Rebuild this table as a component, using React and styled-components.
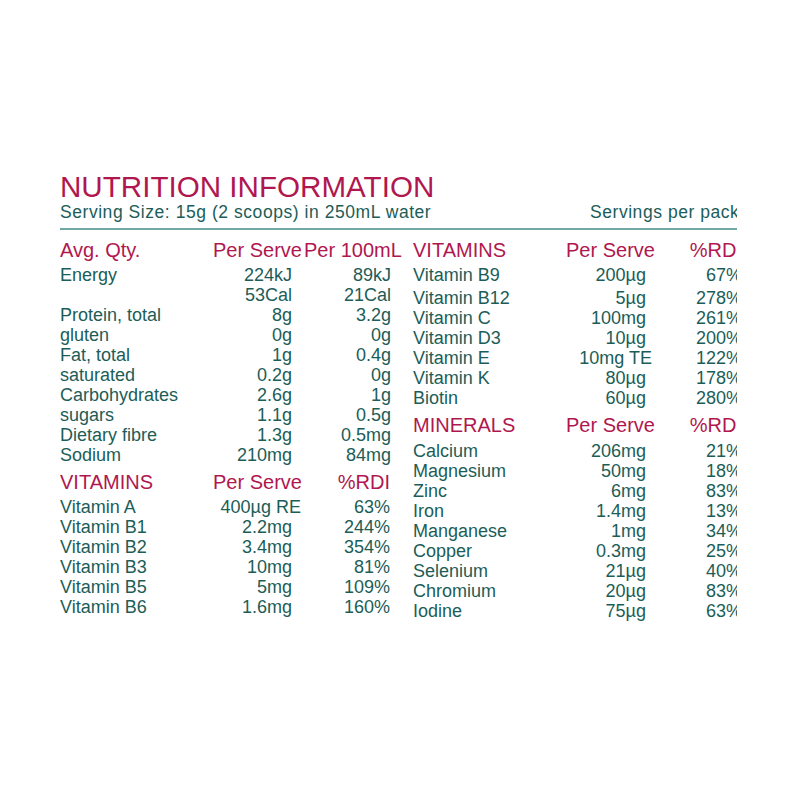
import React from "react";
import styled, { createGlobalStyle } from "styled-components";

const CRIMSON = "#b0174f";
const TEAL = "#1c5d58";

const GlobalStyle = createGlobalStyle`
  html, body {
    margin: 0;
    padding: 0;
    background: #fff;
  }
  body {
    font-family: "Liberation Sans", Arial, sans-serif;
  }
`;

const nutrients = [
  { name: "Energy", serve: "224kJ", per100: "89kJ" },
  { name: "", serve: "53Cal", per100: "21Cal" },
  { name: "Protein, total", serve: "8g", per100: "3.2g" },
  { name: "gluten", serve: "0g", per100: "0g" },
  { name: "Fat, total", serve: "1g", per100: "0.4g" },
  { name: "saturated", serve: "0.2g", per100: "0g" },
  { name: "Carbohydrates", serve: "2.6g", per100: "1g" },
  { name: "sugars", serve: "1.1g", per100: "0.5g" },
  { name: "Dietary fibre", serve: "1.3g", per100: "0.5mg" },
  { name: "Sodium", serve: "210mg", per100: "84mg" },
];

const vitaminsLeft = [
  { name: "Vitamin A", serve: "400µg RE", rdi: "63%", flush: true },
  { name: "Vitamin B1", serve: "2.2mg", rdi: "244%" },
  { name: "Vitamin B2", serve: "3.4mg", rdi: "354%" },
  { name: "Vitamin B3", serve: "10mg", rdi: "81%" },
  { name: "Vitamin B5", serve: "5mg", rdi: "109%" },
  { name: "Vitamin B6", serve: "1.6mg", rdi: "160%" },
];

const vitaminsRight = [
  { name: "Vitamin B9", serve: "200µg", rdi: "67%" },
  { name: "Vitamin B12", serve: "5µg", rdi: "278%", extra: 3 },
  { name: "Vitamin C", serve: "100mg", rdi: "261%" },
  { name: "Vitamin D3", serve: "10µg", rdi: "200%" },
  { name: "Vitamin E", serve: "10mg TE", rdi: "122%", flush: true },
  { name: "Vitamin K", serve: "80µg", rdi: "178%" },
  { name: "Biotin", serve: "60µg", rdi: "280%" },
];

const minerals = [
  { name: "Calcium", serve: "206mg", rdi: "21%" },
  { name: "Magnesium", serve: "50mg", rdi: "18%" },
  { name: "Zinc", serve: "6mg", rdi: "83%" },
  { name: "Iron", serve: "1.4mg", rdi: "13%" },
  { name: "Manganese", serve: "1mg", rdi: "34%" },
  { name: "Copper", serve: "0.3mg", rdi: "25%" },
  { name: "Selenium", serve: "21µg", rdi: "40%" },
  { name: "Chromium", serve: "20µg", rdi: "83%" },
  { name: "Iodine", serve: "75µg", rdi: "63%" },
];

const App = () => {
  return (
    <>
      <GlobalStyle />
      <Page>
        <Panel>
          <Title>NUTRITION INFORMATION</Title>
          <ServingRow>
            <ServingSize>Serving Size: 15g (2 scoops) in 250mL water</ServingSize>
            <span>Servings per pack</span>
          </ServingRow>
          <Rule />
          <Columns>
            <LeftColumn>
              <HeadRow $last={101}>
                <span>Avg. Qty.</span>
                <span>Per Serve</span>
                <HeadCell $indent={3}>Per 100mL</HeadCell>
              </HeadRow>
              {nutrients.map((n, i) => (
                <DataRow key={i} $last={101}>
                  <span>{n.name}</span>
                  <Amount $pad={9}>{n.serve}</Amount>
                  <Amount $pad={11}>{n.per100}</Amount>
                </DataRow>
              ))}

              <HeadRow $last={101} $top={7}>
                <span>VITAMINS</span>
                <span>Per Serve</span>
                <HeadCell $right $pad={12}>%RDI</HeadCell>
              </HeadRow>
              {vitaminsLeft.map((v) => (
                <DataRow key={v.name} $last={101}>
                  <span>{v.name}</span>
                  <Amount $pad={v.flush ? 0 : 9}>{v.serve}</Amount>
                  <Amount $pad={12}>{v.rdi}</Amount>
                </DataRow>
              ))}
            </LeftColumn>

            <RightColumn>
              <HeadRow $last={88}>
                <span>VITAMINS</span>
                <span>Per Serve</span>
                <HeadCell $right>%RDI</HeadCell>
              </HeadRow>
              {vitaminsRight.map((v) => (
                <DataRow key={v.name} $last={88} $extra={v.extra}>
                  <span>{v.name}</span>
                  <Amount $pad={v.flush ? 2 : 8}>{v.serve}</Amount>
                  <Amount $pad={0}>{v.rdi}</Amount>
                </DataRow>
              ))}

              <HeadRow $last={88} $top={7} $after={6}>
                <span>MINERALS</span>
                <span>Per Serve</span>
                <HeadCell $right>%RDI</HeadCell>
              </HeadRow>
              {minerals.map((m) => (
                <DataRow key={m.name} $last={88}>
                  <span>{m.name}</span>
                  <Amount $pad={8}>{m.serve}</Amount>
                  <Amount $pad={0}>{m.rdi}</Amount>
                </DataRow>
              ))}
            </RightColumn>
          </Columns>
        </Panel>
      </Page>
    </>
  );
};

const Page = styled.div`
  width: 800px;
  height: 800px;
  box-sizing: border-box;
  padding: 171px 0 0 60px;
  background: #fff;
  overflow: hidden;
`;

const Panel = styled.div`
  width: 677px;
  overflow: hidden;
`;

const Title = styled.h1`
  margin: 0;
  font-size: 29.6px;
  line-height: 31px;
  font-weight: 400;
  color: ${CRIMSON};
  white-space: nowrap;
`;

const ServingRow = styled.div`
  display: flex;
  font-size: 17.5px;
  line-height: 20px;
  letter-spacing: 0.55px;
  color: ${TEAL};
  white-space: nowrap;
`;

const ServingSize = styled.span`
  flex: 0 0 530px;
`;

const Rule = styled.div`
  margin-top: 6px;
  height: 2px;
  background: #6fa8a5;
`;

const Columns = styled.div`
  display: flex;
  margin-top: 10px;
  width: 700px;
`;

const LeftColumn = styled.div`
  flex: 0 0 353px;
`;

const RightColumn = styled.div`
  flex: 0 0 329px;
`;

const HeadRow = styled.div`
  display: grid;
  grid-template-columns: 153px 88px ${(p) => p.$last}px;
  margin-top: ${(p) => p.$top || 0}px;
  margin-bottom: ${(p) => p.$after || 5}px;
  font-size: 20px;
  line-height: 20px;
  color: ${CRIMSON};
  white-space: nowrap;
`;

const HeadCell = styled.span`
  text-align: ${(p) => (p.$right ? "right" : "left")};
  padding-left: ${(p) => p.$indent || 0}px;
  padding-right: ${(p) => p.$pad || 0}px;
`;

const DataRow = styled.div`
  display: grid;
  grid-template-columns: 153px 88px ${(p) => p.$last}px;
  margin-top: ${(p) => p.$extra || 0}px;
  font-size: 18px;
  line-height: 20px;
  color: ${TEAL};
  white-space: nowrap;
`;

const Amount = styled.span`
  text-align: right;
  padding-right: ${(p) => p.$pad}px;
`;

export default App;
